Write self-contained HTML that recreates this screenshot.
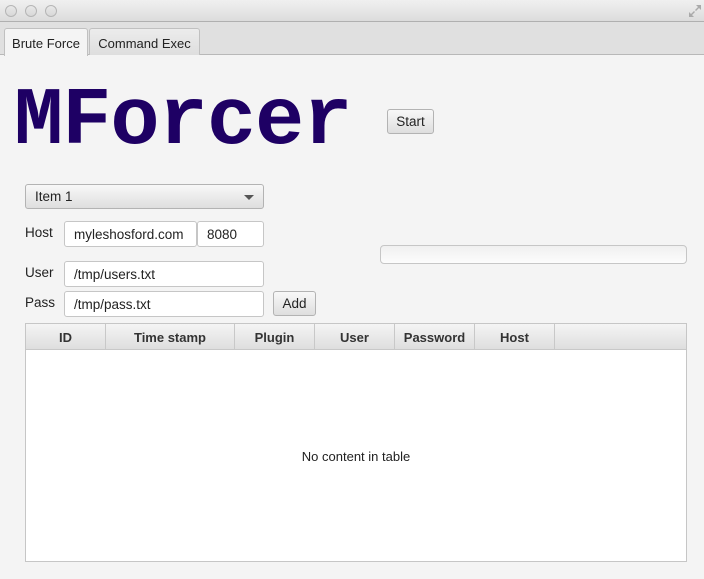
<!DOCTYPE html>
<html><head><style>
*{box-sizing:border-box;margin:0;padding:0}
body{width:704px;height:579px;background:#f4f4f4;font-family:"Liberation Sans",sans-serif;font-size:13px;color:#222;position:relative;overflow:hidden}
.abs{position:absolute}
.title{left:0;top:0;width:704px;height:22px;background:linear-gradient(#f0f0f0,#dcdcdc);border-bottom:1px solid #b0b0b0}
.dot{width:12px;height:12px;border-radius:50%;border:1px solid #b5b5b5;background:linear-gradient(#e8e8e8,#d8d8d8);top:5px}
.tabbar{left:0;top:22px;width:704px;height:33px;background:#e0e0e0;border-bottom:1px solid #b8b8b8}
.tab{top:28px;height:27px;border:1px solid #c0c0c0;border-bottom:none;border-radius:3px 3px 0 0;padding:7px 0 0;font-size:13px;white-space:nowrap;text-align:center}
.field{background:#fff;border:1px solid #c6c6c6;border-radius:3px;height:26px;padding:5px 9px 0;font-size:13.5px;white-space:nowrap}
.btn{border:1px solid #b3b3b3;border-radius:3px;background:linear-gradient(#f8f8f8,#dedede);height:25px;font-size:13.5px;text-align:center;padding-top:4px}
.lbl{font-size:13.5px}
.th{top:0;height:26px;border-right:1px solid #c8c8c8;text-align:center;font-weight:bold;padding-top:6px;font-size:13px;color:#333}
</style></head><body>
<div class="abs title"></div>
<div class="abs dot" style="left:5px"></div>
<div class="abs dot" style="left:25px"></div>
<div class="abs dot" style="left:45px"></div>
<svg class="abs" style="left:688px;top:4px" width="14" height="14" viewBox="0 0 14 14"><path d="M8 1h5v5l-2-2-3 3-1-1 3-3zM6 13H1V8l2 2 3-3 1 1-3 3z" fill="#aaa"/></svg>
<div class="abs tabbar"></div>
<div class="abs tab" style="left:4px;width:84px;background:#f4f4f4;height:28px">Brute Force</div>
<div class="abs tab" style="left:89px;width:111px;background:linear-gradient(#ececec,#dedede)">Command Exec</div>
<div class="abs" style="left:14px;top:72px;font-family:'Liberation Mono',monospace;font-size:82px;font-weight:bold;color:#1e0064;letter-spacing:-1px;line-height:100px">MForcer</div>
<div class="abs btn" style="left:387px;top:109px;width:47px">Start</div>
<div class="abs btn" style="left:25px;top:184px;width:239px;text-align:left;padding-left:9px">Item 1<span class="abs" style="right:9px;top:10px;border:5px solid transparent;border-top:5px solid #555;border-bottom:none"></span></div>
<div class="abs lbl" style="left:25px;top:225px">Host</div>
<div class="abs field" style="left:64px;top:221px;width:133px">myleshosford.com</div>
<div class="abs field" style="left:197px;top:221px;width:67px">8080</div>
<div class="abs" style="left:380px;top:245px;width:307px;height:19px;border:1px solid #c6c6c6;border-radius:4px;background:linear-gradient(#f0f0f0,#fcfcfc)"></div>
<div class="abs lbl" style="left:25px;top:265px">User</div>
<div class="abs field" style="left:64px;top:261px;width:200px">/tmp/users.txt</div>
<div class="abs lbl" style="left:25px;top:295px">Pass</div>
<div class="abs field" style="left:64px;top:291px;width:200px">/tmp/pass.txt</div>
<div class="abs btn" style="left:273px;top:291px;width:43px">Add</div>
<div class="abs" style="left:25px;top:323px;width:662px;height:239px;border:1px solid #c6c6c6;background:#fff">
<div class="abs" style="left:0;top:0;width:660px;height:26px;background:linear-gradient(#f4f4f4,#dedede);border-bottom:1px solid #c8c8c8"></div>
<div class="abs th" style="left:0;width:80px">ID</div>
<div class="abs th" style="left:80px;width:129px">Time stamp</div>
<div class="abs th" style="left:209px;width:80px">Plugin</div>
<div class="abs th" style="left:289px;width:80px">User</div>
<div class="abs th" style="left:369px;width:80px">Password</div>
<div class="abs th" style="left:449px;width:80px">Host</div>
<div class="abs" style="left:0;top:125px;width:660px;text-align:center;font-size:13px">No content in table</div>
</div>
</body></html>
